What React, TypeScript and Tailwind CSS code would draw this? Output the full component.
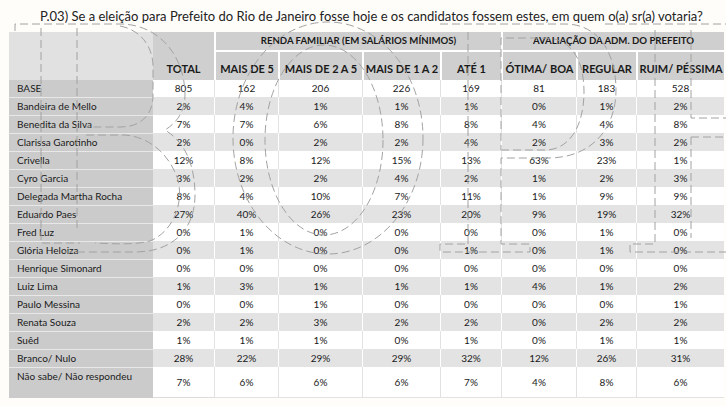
import React from "react";

const cols = ["TOTAL", "MAIS DE 5", "MAIS DE 2 A 5", "MAIS DE 1 A 2", "ATÉ 1", "ÓTIMA/ BOA", "REGULAR", "RUIM/ PÉSSIMA"];
const base = ["805", "162", "206", "226", "169", "81", "183", "528"];
const rows: string[][] = [
  ["Bandeira de Mello", "2%", "4%", "1%", "1%", "1%", "0%", "1%", "2%"],
  ["Benedita da Silva", "7%", "7%", "6%", "8%", "8%", "4%", "4%", "8%"],
  ["Clarissa Garotinho", "2%", "0%", "2%", "2%", "4%", "2%", "3%", "2%"],
  ["Crivella", "12%", "8%", "12%", "15%", "13%", "63%", "23%", "1%"],
  ["Cyro Garcia", "3%", "2%", "2%", "4%", "2%", "1%", "2%", "3%"],
  ["Delegada Martha Rocha", "8%", "4%", "10%", "7%", "11%", "1%", "9%", "9%"],
  ["Eduardo Paes", "27%", "40%", "26%", "23%", "20%", "9%", "19%", "32%"],
  ["Fred Luz", "0%", "1%", "0%", "0%", "0%", "0%", "1%", "0%"],
  ["Glória Heloiza", "0%", "1%", "0%", "0%", "1%", "0%", "1%", "0%"],
  ["Henrique Simonard", "0%", "0%", "0%", "0%", "0%", "0%", "0%", "0%"],
  ["Luiz Lima", "1%", "3%", "1%", "1%", "1%", "4%", "1%", "2%"],
  ["Paulo Messina", "0%", "0%", "1%", "0%", "0%", "0%", "0%", "1%"],
  ["Renata Souza", "2%", "2%", "3%", "2%", "2%", "0%", "2%", "2%"],
  ["Suêd", "1%", "1%", "1%", "0%", "1%", "0%", "1%", "1%"],
  ["Branco/ Nulo", "28%", "22%", "29%", "29%", "32%", "12%", "26%", "31%"],
  ["Não sabe/ Não respondeu", "7%", "6%", "6%", "6%", "7%", "4%", "8%", "6%"],
];

function Watermark() {
  return (
    <svg
      className="absolute left-0 top-0 pointer-events-none"
      width="726"
      height="406"
      viewBox="0 0 726 406"
      fill="none"
      stroke="#a2a2a2"
      strokeWidth="1"
      strokeDasharray="8 4"
    >
      {/* B */}
      <path d="M15,31 V24 H120 C158,24 185,55 185,95 C185,110 178,122 165,130 C185,142 195,165 195,195 C195,230 172,252 135,252 H60" />
      <path d="M41,28 V243 H80" />
      <path d="M77,28 V232" />
      <path d="M120,26 C140,30 152,45 153,65 V95 C153,114 142,127 120,127 H86" />
      <path d="M86,135 H125 C150,137 170,155 178,180 C184,205 172,232 150,241 C135,245 115,244 95,243" />
      {/* O */}
      <ellipse cx="328" cy="138" rx="95" ry="116" />
      <ellipse cx="324" cy="140" rx="59" ry="95" />
      {/* P */}
      <path d="M468,244 V30 M440,24 H565 C598,24 616,52 616,90 C616,128 592,158 548,158 H501 V244 H530 V252 H440 V244 H468" />
      <path d="M501,150 H545 C570,150 584,125 584,92 C584,58 570,38 545,38 H501 V150" />
      {/* E */}
      <path d="M605,24 H726 M691,30 V118 H726 M691,137 H726 M691,137 V238 M655,30 V244 H630 V252 H726" />
    </svg>
  );
}

export default function App() {
  const font = { fontFamily: "Lato, 'Liberation Sans', sans-serif" };
  return (
    <div className="relative w-[726px] h-[406px] overflow-hidden bg-[#fffdfa] text-[#1a1a1a]" style={font}>
      <div className="pl-[40px] pt-[8px] h-[32px] text-[13px] leading-[16px] text-[#222]">
        P.03) Se a eleição para Prefeito do Rio de Janeiro fosse hoje e os candidatos fossem estes, em quem o(a) sr(a) votaria?
      </div>
      <div className="ml-[9px] grid grid-cols-[144px_61px_64px_84px_78px_61px_75px_60px_88px] grid-rows-[18px_30px_17px_repeat(15,18px)_31px] text-[10px]">
        {/* header */}
        <div className="row-span-2 bg-[#e1e1e1]" />
        <div className="row-span-2 bg-[#cfcfcf] flex items-end justify-center pb-[3px] font-bold text-[11px]">TOTAL</div>
        <div className="col-span-4 bg-[#cfcfcf] border-l-2 border-white flex items-center justify-center font-bold text-[9.6px]">
          RENDA FAMILIAR (EM SALÁRIOS MÍNIMOS)
        </div>
        <div className="col-span-3 bg-[#cfcfcf] border-l-2 border-white flex items-center justify-center font-bold text-[9.6px]">
          AVALIAÇÃO DA ADM. DO PREFEITO
        </div>
        {cols.slice(1).map((c) => (
          <div key={c} className="bg-[#cfcfcf] border-l-2 border-t-2 border-white flex items-end justify-center pb-[3px] font-bold text-[11px] whitespace-nowrap">
            {c}
          </div>
        ))}
        {/* BASE */}
        <div className="bg-[#cbcbcb] flex items-center pl-[8px]">BASE</div>
        {base.map((v, i) => (
          <div key={i} className={`bg-white flex items-center justify-center ${i > 0 ? "border-l border-[#e2e2e2]" : ""}`}>
            {v}
          </div>
        ))}
        {rows.map((r, ri) => {
          const grey = ri % 2 === 0;
          const last = ri === rows.length - 1;
          return (
            <React.Fragment key={r[0]}>
              <div className={`bg-[#cbcbcb] border-t border-[#e8e8e8] pl-[8px] leading-[17px] ${last ? "" : "flex items-center"}`}>
                {r[0]}
              </div>
              {r.slice(1).map((v, i) => (
                <div
                  key={i}
                  className={`flex items-center justify-center ${grey ? "bg-[#e3e3e3]" : "bg-white"} ${
                    i > 0 ? (grey ? "border-l border-white" : "border-l border-[#e2e2e2]") : ""
                  } ${last ? "border-b border-[#dcdcdc]" : ""}`}
                >
                  {v}
                </div>
              ))}
            </React.Fragment>
          );
        })}
      </div>
      <Watermark />
    </div>
  );
}
